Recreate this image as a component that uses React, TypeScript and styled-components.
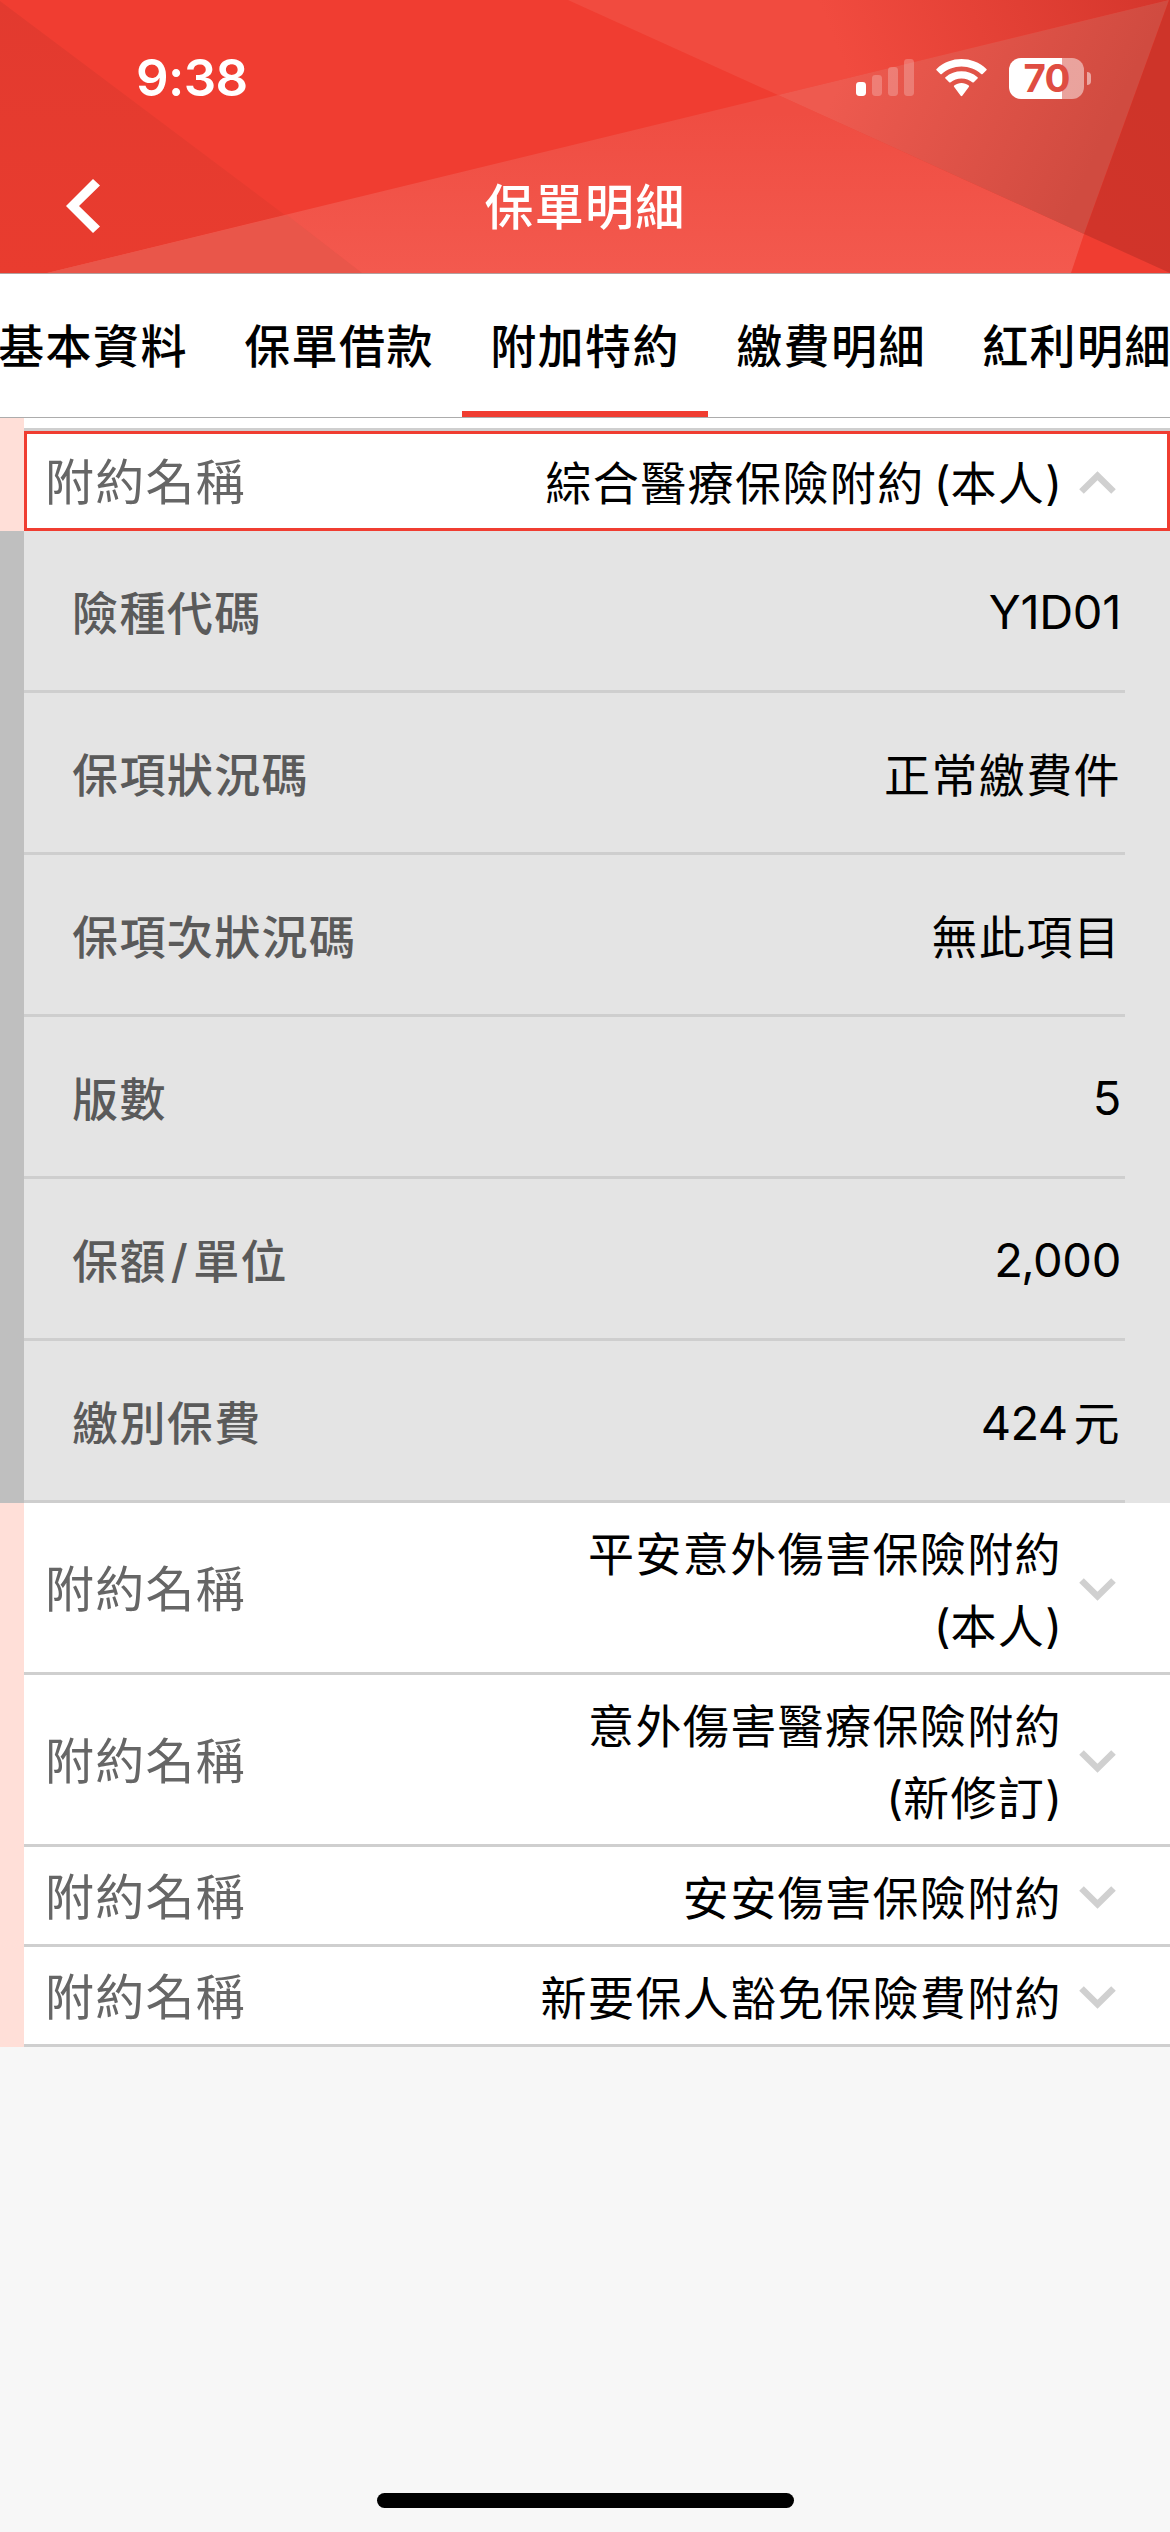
import React from "react";
import styled, { createGlobalStyle } from "styled-components";

const cjk = `Inter, "Noto Sans CJK TC", sans-serif`;
const RED = "#f03d31";

const GlobalStyle = createGlobalStyle`
  * { box-sizing: border-box; }
  body { margin: 0; background: #f7f7f7; }
`;

const Screen = styled.div`
  width: 1170px;
  height: 2532px;
  display: flex;
  flex-direction: column;
  overflow: hidden;
  background: #f7f7f7;
  font-family: ${cjk};
  color: #000;
`;

const Header = styled.header`
  position: relative;
  flex: none;
  height: 274px;
  display: flex;
  flex-direction: column;
  background: ${RED};
  border-bottom: 1px solid #b3a09e;
`;

const Backdrop = styled.svg`
  position: absolute;
  inset: 0;
`;

const StatusBar = styled.div`
  position: relative;
  height: 156px;
  display: flex;
  align-items: center;
  justify-content: space-between;
  padding: 0 79px 0 136px;
`;

const Clock = styled.div`
  color: #fff;
  font-size: 51px;
  font-weight: 600;
  line-height: 60px;
  letter-spacing: -0.6px;
`;

const StatusIcons = styled.div`
  display: flex;
  align-items: center;
  gap: 22px;
`;

const NavBar = styled.div`
  position: relative;
  height: 117px;
  padding: 0 66px;
  display: grid;
  grid-template-columns: 100px 1fr 100px;
  align-items: start;
`;

const BackButton = styled.button`
  border: 0;
  padding: 23px 0 0;
  background: none;
  display: flex;
`;

const Title = styled.h1`
  margin: 0;
  padding-top: 16px;
  text-align: center;
  color: #fff;
  font-size: 49px;
  font-weight: 500;
  line-height: 72px;
  letter-spacing: 1.2px;
`;

const Tabs = styled.nav`
  flex: none;
  height: 144px;
  display: flex;
  background: #fff;
  border-bottom: 1px solid #acacac;
  overflow: hidden;
`;

const Tab = styled.div<{ $active?: boolean }>`
  flex: none;
  width: 246px;
  height: 143px;
  padding-top: 36px;
  text-align: center;
  font-size: 46px;
  font-weight: 500;
  line-height: 72px;
  letter-spacing: 1.4px;
  white-space: nowrap;
  border-bottom: 6px solid ${(p) => (p.$active ? RED : "transparent")};
  &:first-child { margin-left: -30px; }
`;

const List = styled.main`
  display: flex;
  flex-direction: column;
`;

const TopGap = styled.div`
  height: 13px;
  background: #fff;
  border-left: 24px solid #ffdfd8;
  display: flex;
  align-items: flex-end;
  &::after { content: ""; flex: 1; height: 3px; background: #cfcfcf; }
`;

const Rider = styled.div`
  display: flex;
  background: #fff;
  border-left: 24px solid #ffdfd8;
`;

const RiderBody = styled.div<{ $open?: boolean; $tall?: boolean }>`
  flex: 1;
  height: ${(p) => (p.$tall ? 172 : 100)}px;
  display: flex;
  align-items: center;
  padding: ${(p) => (p.$open ? "2px 51px 0 18px" : "3px 54px 0 21px")};
  border: 0 solid #cfcfcf;
  border-bottom-width: 3px;
  ${(p) => p.$open && `border: 3px solid ${RED};`}
`;

const RiderLabel = styled.span`
  flex: 1;
  padding-top: 2px;
  color: #666;
  font-size: 49px;
  line-height: 72px;
  letter-spacing: 1.2px;
`;

const RiderName = styled.span`
  text-align: right;
  padding-top: 2px;
  font-size: 46px;
  line-height: 72px;
  letter-spacing: 1.4px;
  margin-right: 17px;
`;

const Paren = styled.span<{ $gap?: boolean }>`
  font-family: Inter, sans-serif;
  font-size: 46px;
  line-height: 1;
  letter-spacing: 0;
  margin-left: ${(p) => (p.$gap ? 9 : 0)}px;
`;

const Details = styled.div`
  background: #e4e4e4;
  border-left: 24px solid #bfbfbf;
  padding-right: 45px;
`;

const DetailRow = styled.div`
  height: 162px;
  display: flex;
  align-items: center;
  justify-content: space-between;
  padding: 2px 4px 0 48px;
  border-bottom: 3px solid #cecece;
  font-size: 46px;
  line-height: 72px;
`;

const DetailLabel = styled.span`
  padding-top: 2px;
  color: #5a5a5a;
  font-weight: 500;
  letter-spacing: 1.4px;
`;

const DetailValue = styled.span<{ $latin?: boolean }>`
  padding-top: ${(p) => (p.$latin ? 0 : 2)}px;
  letter-spacing: ${(p) => (p.$latin ? -0.3 : 1.4)}px;
  font-size: ${(p) => (p.$latin ? 47 : 46)}px;
`;

const Amount = styled.span`
  font-size: 47px;
  letter-spacing: -0.6px;
  margin-right: 6px;
`;

const Comma = styled.span`
  margin: 0 -1.5px;
`;

const Slash = styled.span`
  margin: 0 4px;
`;

const Footer = styled.footer`
  margin-top: auto;
  height: 39px;
  display: flex;
  justify-content: center;
`;

const HomeIndicator = styled.div`
  width: 417px;
  height: 15px;
  border-radius: 8px;
  background: #000;
`;

function HeaderArt() {
  return (
    <Backdrop width="1170" height="273" viewBox="0 0 1170 273">
      <defs>
        <linearGradient id="left" x1="0" y1="0" x2="0" y2="1">
          <stop offset="0" stopColor="#e23a2f" />
          <stop offset="1" stopColor="#e93c2f" />
        </linearGradient>
        <linearGradient id="low" x1="0" y1="0" x2="0" y2="1">
          <stop offset="0.1" stopColor="#ef4d42" />
          <stop offset="1" stopColor="#f3594e" />
        </linearGradient>
        <linearGradient id="top" gradientUnits="userSpaceOnUse" x1="850" y1="80" x2="1150" y2="-40">
          <stop offset="0" stopColor="#f14b3f" />
          <stop offset="1" stopColor="#d5362c" />
        </linearGradient>
        <linearGradient id="mid" gradientUnits="userSpaceOnUse" x1="840" y1="80" x2="1080" y2="190">
          <stop offset="0" stopColor="#ee5a4f" />
          <stop offset="1" stopColor="#d04b40" />
        </linearGradient>
        <linearGradient id="right" gradientUnits="userSpaceOnUse" x1="1100" y1="230" x2="1190" y2="130">
          <stop offset="0" stopColor="#d1342a" />
          <stop offset="1" stopColor="#ce3429" />
        </linearGradient>
      </defs>
      <polygon points="0,1 362,273 0,273" fill="url(#left)" />
      <polygon points="568,0 1170,0 778,95" fill="url(#top)" />
      <polygon points="47,273 778,95 1084,234 1071,273" fill="url(#low)" />
      <polygon points="47,273 287,215 362,273" fill="#e9564a" />
      <polygon points="778,95 1169,0 1084,234" fill="url(#mid)" />
      <polygon points="1169,0 1170,0 1170,273 1084,234" fill="url(#right)" />
    </Backdrop>
  );
}

function Signal() {
  return (
    <svg width="58" height="42" viewBox="0 0 58 42" fill="#fff">
      <rect x="0" y="25" width="10" height="14" rx="3.4" />
      <rect x="16" y="18" width="10" height="21" rx="3.4" opacity=".23" />
      <rect x="32" y="10" width="10" height="29" rx="3.4" opacity=".23" />
      <rect x="48" y="2" width="10" height="37" rx="3.4" opacity=".23" />
    </svg>
  );
}

function Wifi() {
  return (
    <svg width="51" height="42" viewBox="0 0 51 42" fill="#fff">
      <g transform="translate(-3.5 -1.4) scale(1.137 1.075)">
        <path d="M25.5 10.2c6.6 0 12.7 2.6 17.3 6.9.4.4.9.4 1.3 0l3.3-3.4c.4-.4.4-1 0-1.3C35.2.1 15.800.1 3.600 12.400c-.4.3-.4.9 0 1.300l3.300 3.400c.4.4.9.4 1.300 0 4.600-4.300 10.700-6.900 17.300-6.900z" />
        <path d="M25.500 21.200c3.700 0 7 1.300 9.500 3.600.4.4 1 .4 1.300 0l3.300-3.400c.4-.4.4-1 0-1.300-8-7.400-20.200-7.400-28.200 0-.4.3-.4.9 0 1.300l3.300 3.400c.4.4.9.4 1.300 0 2.500-2.300 5.800-3.600 9.500-3.600z" />
        <path d="M31.900 29.200c.4-.4.4-1 0-1.300-3.700-3.100-9.100-3.100-12.800 0-.4.3-.4.9 0 1.300l5.700 8.200c.4.5 1 .5 1.400 0z" />
      </g>
    </svg>
  );
}

const BatteryWrap = styled.div`
  display: flex;
  align-items: center;
  gap: 3px;
`;

const BatteryBody = styled.div`
  width: 75px;
  height: 41px;
  border-radius: 12px;
  background: linear-gradient(90deg, #fff 53px, rgba(255, 255, 255, 0.48) 53px);
  color: #df4d42;
  font-size: 38.5px;
  font-weight: 650;
  line-height: 41px;
  letter-spacing: -0.8px;
  text-align: center;
`;

const BatteryCap = styled.div`
  width: 4px;
  height: 13px;
  border-radius: 0 5px 5px 0;
  background: rgba(255, 255, 255, 0.5);
`;

function Chevron({ up }: { up?: boolean }) {
  return (
    <svg width="37" height="23" viewBox="0 0 37 23" fill="none" stroke="#d0d0d0" strokeWidth="6.5">
      <path d={up ? "M2.5 20.5 18.5 4.700 34.500 20.500" : "M2.5 2.5 18.5 18.3 34.5 2.5"} />
    </svg>
  );
}

const tabs = ["基本資料", "保單借款", "附加特約", "繳費明細", "紅利明細"];

const details: [React.ReactNode, React.ReactNode, boolean?][] = [
  ["險種代碼", "Y1D01", true],
  ["保項狀況碼", "正常繳費件"],
  ["保項次狀況碼", "無此項目"],
  ["版數", "5", true],
  [<>保額<Slash>/</Slash>單位</>, <>2<Comma>,</Comma>000</>, true],
  ["繳別保費", <><Amount>424</Amount>元</>],
];

interface RiderProps {
  name: string;
  note?: string;
  open?: boolean;
  wrap?: boolean;
}

function RiderRow({ name, note, open, wrap }: RiderProps) {
  return (
    <Rider>
      <RiderBody $open={open} $tall={wrap}>
        <RiderLabel>附約名稱</RiderLabel>
        <RiderName>
          {name}
          {wrap && <br />}
          {note && (
            <>
              <Paren $gap={!wrap}>(</Paren>
              {note}
              <Paren>)</Paren>
            </>
          )}
        </RiderName>
        <Chevron up={open} />
      </RiderBody>
    </Rider>
  );
}

export default function App() {
  return (
    <Screen>
      <GlobalStyle />
      <Header>
        <HeaderArt />
        <StatusBar>
          <Clock>9:38</Clock>
          <StatusIcons>
            <Signal />
            <Wifi />
            <BatteryWrap>
              <BatteryBody>70</BatteryBody>
              <BatteryCap />
            </BatteryWrap>
          </StatusIcons>
        </StatusBar>
        <NavBar>
          <BackButton aria-label="返回">
            <svg width="34" height="54" viewBox="0 0 34 54" fill="#fff">
              <path d="M27 0 34 6.5 13 27 34 47.5 27 54 0 27z" />
            </svg>
          </BackButton>
          <Title>保單明細</Title>
        </NavBar>
      </Header>
      <Tabs>
        {tabs.map((t, i) => (
          <Tab key={t} $active={i === 2}>{t}</Tab>
        ))}
      </Tabs>
      <List>
        <TopGap />
        <RiderRow name="綜合醫療保險附約" note="本人" open />
        <Details>
          {details.map(([label, value, latin], i) => (
            <DetailRow key={i}>
              <DetailLabel>{label}</DetailLabel>
              <DetailValue $latin={latin}>{value}</DetailValue>
            </DetailRow>
          ))}
        </Details>
        <RiderRow name="平安意外傷害保險附約" note="本人" wrap />
        <RiderRow name="意外傷害醫療保險附約" note="新修訂" wrap />
        <RiderRow name="安安傷害保險附約" />
        <RiderRow name="新要保人豁免保險費附約" />
      </List>
      <Footer>
        <HomeIndicator />
      </Footer>
    </Screen>
  );
}
